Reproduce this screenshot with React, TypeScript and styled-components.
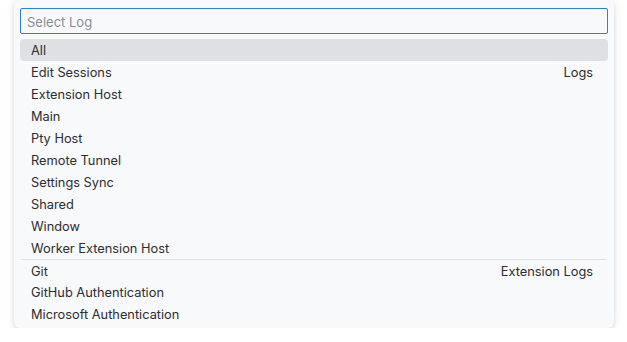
import React from "react";
import styled, { createGlobalStyle, css } from "styled-components";

const GlobalStyle = createGlobalStyle`
  html, body {
    margin: 0;
    background: #ffffff;
  }
  body {
    font-family: Inter, "Liberation Sans", sans-serif;
  }
`;

//////////////////////////////////////////////////////////////////////////////

const SPage = styled.div`
  padding: 0 13px 0 14px;
`;

const SPanel = styled.div`
  width: 600px;
  box-sizing: border-box;
  background-color: #f8f9fb;
  border-radius: 6px;
  box-shadow: 0 1px 8px rgba(0, 0, 0, 0.13), 0 2px 4px rgba(0, 0, 0, 0.06);
  padding: 8px 6px 3px 6px;
`;

const SInput = styled.input`
  display: block;
  width: 100%;
  box-sizing: border-box;
  height: 26px;
  margin: 0 0 5px 0;
  padding: 1px 6px 0 6px;
  border: 1px solid #2a7cf0;
  border-radius: 2px;
  background-color: #f8f9fb;
  font-family: Inter, "Liberation Sans", sans-serif;
  font-size: 13px;
  color: #333;
  outline: none;

  &::placeholder {
    color: #8c8d92;
  }
`;

const SList = styled.div`
  display: flex;
  flex-direction: column;
`;

interface IRowProps {
  selected?: boolean;
  separator?: boolean;
}

const SRow = styled.div<IRowProps>`
  display: flex;
  justify-content: space-between;
  align-items: center;
  box-sizing: border-box;
  height: 22px;
  padding: 1px 15px 0 11px;
  font-size: 12.8px;
  color: #2d2d30;
  border-radius: 4px;

  ${(props) =>
    props.selected &&
    css`
      background-color: #dfe0e4;
    `}

  ${(props) =>
    props.separator &&
    css`
      border-radius: 0;
      border-top: 1px solid #e1e2e5;
      margin: 0 2px 0 1px;
      padding: 1px 13px 0 10px;
    `}
`;

const SLabel = styled.span``;

const SGroup = styled.span`
  color: #2d2d30;
`;

////////////////////////////////////////////////////////////////////////////

const items = [
  { label: "All" },
  { label: "Edit Sessions", group: "Logs" },
  { label: "Extension Host" },
  { label: "Main" },
  { label: "Pty Host" },
  { label: "Remote Tunnel" },
  { label: "Settings Sync" },
  { label: "Shared" },
  { label: "Window" },
  { label: "Worker Extension Host" },
  { label: "Git", group: "Extension Logs", separator: true },
  { label: "GitHub Authentication" },
  { label: "Microsoft Authentication" },
];

const App = () => {
  return (
    <SPage>
      <GlobalStyle />
      <SPanel>
        <SInput placeholder="Select Log" />
        <SList>
          {items.map((item, i) => (
            <SRow key={item.label} selected={i === 0} separator={item.separator}>
              <SLabel>{item.label}</SLabel>
              {item.group && <SGroup>{item.group}</SGroup>}
            </SRow>
          ))}
        </SList>
      </SPanel>
    </SPage>
  );
};

export default App;
